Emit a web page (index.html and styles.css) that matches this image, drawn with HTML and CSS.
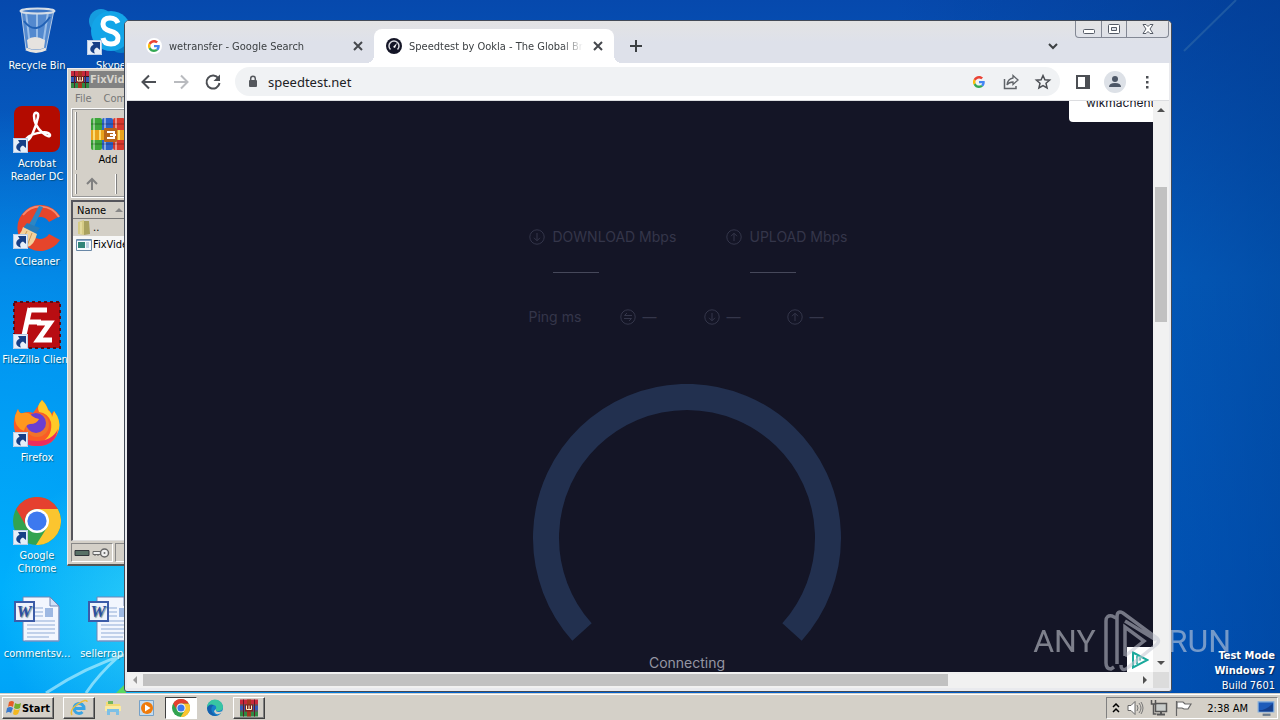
FILE: index.html
```html
<!DOCTYPE html>
<html lang="en">
<head>
<meta charset="utf-8">
<title>Desktop</title>
<link rel="stylesheet" href="styles.css">
</head>
<body>
<svg class="defs" aria-hidden="true">
  <symbol id="shortcut" viewBox="0 0 15 15">
    <path d="M0 0h15v15H0z" fill="#e6eef8"/><path d="M.5.5h14v14H.5z" fill="none" stroke="#b9cce6"/>
    <path d="M5 2h8v8l-3-2.500C7 8.500 6.500 11 8 13.500 2.500 12.500 1.500 7.500 6.500 4.800z" fill="#173f86"/>
  </symbol>
  <symbol id="chrome" viewBox="0 0 48 48">
    <circle cx="24" cy="24" r="24" fill="#32a350"/>
    <path d="M24 12h20.800A24 24 0 0 1 23 48l11.400-18z" fill="#fbc52f"/>
    <path d="M3.200 12A24 24 0 0 1 44.800 12H24a12 12 0 0 0-10.400 18z" fill="#e5402f"/>
    <circle cx="24" cy="24" r="12" fill="#fff"/><circle cx="24" cy="24" r="9.600" fill="#3d79ef"/>
  </symbol>
  <symbol id="rar" viewBox="0 0 34 34">
    <rect y="1" width="11" height="32" rx="2" fill="#3da53a"/><rect x="11" y="1" width="11" height="32" rx="2" fill="#2c62c8"/><rect x="22" y="1" width="12" height="32" rx="2" fill="#d8392d"/>
    <path d="M3 1v32M14 1v32M25 1v32" stroke="#fff" stroke-opacity=".45" stroke-width="2"/>
    <path d="M0 7h34M0 27h34" stroke="#000" stroke-opacity=".15" stroke-width="2"/>
    <path d="M0 13h34v10H0z" fill="#e9a21c"/><path d="M3 13v10M9 13v10M28 13v10" stroke="#fbdc75" stroke-width="2"/>
    <rect x="13" y="11" width="13" height="14" rx="1" fill="#b5651a"/><path d="M16 15h7v6h-7M19 18h6" fill="none" stroke="#fff" stroke-width="2"/>
  </symbol>
  <symbol id="rar-small" viewBox="0 0 18 17">
    <path d="M0 0h18v5H0z" fill="#c8283c"/><path d="M0 6h18v5H0z" fill="#3558b4"/><path d="M0 12h18v5H0z" fill="#2f8a43"/>
    <path d="M0 5.500h18M0 11.500h18" stroke="#241a28"/><path d="M3.500 0v17M14.500 0v17" stroke="#631827"/>
    <path d="M7 0h4v17H7z" fill="#a5381f"/><path d="M5 5h8v7H5z" fill="#7b251f"/><path d="M6.500 6v4h5V6M9 6v4" fill="none" stroke="#fff2cb"/>
  </symbol>
  <symbol id="google" viewBox="0 0 48 48">
    <path fill="#EA4335" d="M24 9.500c3.540 0 6.710 1.220 9.210 3.600l6.850-6.850C35.900 2.380 30.470 0 24 0 14.620 0 6.510 5.380 2.560 13.220l7.980 6.190C12.430 13.720 17.740 9.500 24 9.500z"/>
    <path fill="#4285F4" d="M46.980 24.550c0-1.570-.15-3.090-.38-4.550H24v9.020h12.940c-.58 2.960-2.260 5.480-4.780 7.180l7.730 6c4.510-4.180 7.090-10.360 7.090-17.650z"/>
    <path fill="#FBBC05" d="M10.530 28.590a14.500 14.500 0 0 1 0-9.180l-7.980-6.190a24 24 0 0 0 0 21.560z"/>
    <path fill="#34A853" d="M24 48c6.480 0 11.930-2.130 15.890-5.810l-7.730-6C30.010 37.640 27.240 38.490 24 38.490c-6.260 0-11.570-4.220-13.470-9.910l-7.980 6.190C6.510 42.620 14.620 48 24 48z"/>
  </symbol>
  <symbol id="word" viewBox="0 0 48 48">
    <path d="M10 2h27l9 9v35H10z" fill="#f2f6fe" stroke="#6f86b6"/><path d="M37 2v9h9z" fill="#cfe0f7" stroke="#6f86b6"/>
    <path d="M12 46h34V12" fill="none" stroke="#8098c8"/>
    <path d="M22 13h8M22 17h8M22 21h8M14 26h28M14 30h28M14 34h28M14 38h28M14 42h22" stroke="#8fabd6"/>
    <path d="M32 13h8v9h-8z" fill="#9db8e2"/>
    <rect x="2" y="7" width="19" height="19" fill="#eef3fd" stroke="#3c5ca8" stroke-width="2"/>
    <text x="11" y="22" text-anchor="middle" font-family="Liberation Serif, serif" font-weight="bold" font-style="italic" font-size="17" fill="#2b4fa2">W</text>
  </symbol>
  <symbol id="down" viewBox="0 0 16 16"><circle cx="8" cy="8" r="7.200"/><path d="M8 4v7.500M5 8.800l3 3 3-3"/></symbol>
  <symbol id="up" viewBox="0 0 16 16"><circle cx="8" cy="8" r="7.200"/><path d="M8 12V4.500M5 7.200l3-3 3 3"/></symbol>
  <symbol id="ping" viewBox="0 0 16 16"><circle cx="8" cy="8" r="7.200"/><path d="M12 6.500H4.500l2.500-2.500M4 9.500h7.500L9 12"/></symbol>
  <symbol id="close" viewBox="0 0 16 16"><path d="M4 4l8 8M12 4l-8 8" fill="none" stroke="#45484d" stroke-width="2"/></symbol>
</svg>

<main class="desktop">
  <svg class="streaks" viewBox="0 0 130 130" aria-hidden="true">
    <path d="M46 130Q85 104 130 90M86 130Q98 112 118 94" fill="none" stroke="#c9f6ff" stroke-opacity=".6" stroke-width="3"/>
    <path d="M116 130l10-10v10z" fill="#58d860"/>
  </svg>
  <svg class="glow" viewBox="0 0 108 80" aria-hidden="true"><path d="M12 51L64 0" stroke="#2f69a8" stroke-opacity=".6" stroke-width="2"/></svg>

  <ul class="icons">
    <li class="icon"><svg viewBox="0 0 48 48"><path d="M8 3l5 39q10 5 20 0l8-39z" fill="#7eaade" fill-opacity=".65" stroke="#b6cae4"/><path d="M13 5l4 34M24 6v34M35 5l-5 33" stroke="#c8e0f8" stroke-opacity=".6" stroke-width="2"/><path d="M14 33q7-6 18 0l-1 8q-8 3-16 0z" fill="#e6e3df"/><path d="M11 14q12 16 26-4" fill="none" stroke="#2161b5" stroke-width="2"/><path d="M13 42q10 5 20 0" fill="none" stroke="#e9e5df" stroke-width="3"/><ellipse cx="24.500" cy="4" rx="17" ry="2.500" fill="#3d76c5" stroke="#d5dde6" stroke-width="2"/></svg><span>Recycle Bin</span></li>
    <li class="icon"><svg viewBox="0 0 48 48"><rect x="1" y="1" width="46" height="46" rx="8" fill="#b30b00"/><path d="M12 36c2-7 23-12 25-6 1 5-16-5-16-19 0-5 5-4 4 1-2 10-8 26-13 24" fill="none" stroke="#fff" stroke-width="2.500"/><use href="#shortcut" y="33" width="15" height="15"/></svg><span>Acrobat<br>Reader DC</span></li>
    <li class="icon"><svg viewBox="0 0 48 48"><path d="M47 13A23 23 0 1 0 47 37l-11-6a11 11 0 1 1 0-12z" fill="#e5452b"/><path d="M46 14A22 22 0 0 0 10 12" fill="none" stroke="#f6896b" stroke-width="2"/><path d="M30 4L21 24l-5-2L26 3z" fill="#2c86c4"/><path d="M14 20l13 5-4 5-13-5z" fill="#277cb9"/><path d="M10 24l14 7q-3 12-10 13L1 35q7-3 9-11z" fill="#f2d19b"/><path d="M14 28l-6 12M19 30l-5 13" stroke="#c99755"/><use href="#shortcut" y="31" width="15" height="15"/></svg><span>CCleaner</span></li>
    <li class="icon"><svg viewBox="0 0 48 48"><path d="M1 1h46v46H1z" fill="#b80d12"/><path d="M1 1h46v46H1z" fill="none" stroke="#590c16" stroke-width="2" stroke-dasharray="3 3"/><path d="M17 9h17M13 21h15M17 7L10 39M24 22h13L25 39h14" fill="none" stroke="#fff" stroke-width="5"/><use href="#shortcut" y="33" width="15" height="15"/></svg><span>FileZilla Client</span></li>
    <li class="icon"><svg viewBox="0 0 48 48"><path d="M5 10q1 5 5 4 6-2 10 0l5-7 4-6q4 4 6 9 3 2 3 5l3-3q6 9 5 17-3 18-22 18T1 29Q0 18 5 10z" fill="#fa5b25"/><path d="M29 1q5 5 6 10 4 3 4 7l2-6q7 9 5 18-4 13-17 13 11-7 9-20-3-9-12-10-3-6 3-12z" fill="#ffca28"/><circle cx="24" cy="26" r="12" fill="#f1732a"/><circle cx="23" cy="24" r="10" fill="#6b3ed0"/><path d="M5 10q1 5 5 4 6-1 9 3 4 3 7 3-2 5-9 5-5 1-6 7Q1 28 2 17z" fill="#ff981f"/><path d="M3 32q6 10 21 10 15 0 21-12-3 17-21 17Q7 47 3 32z" fill="#ed2c5d"/><use href="#shortcut" y="33" width="15" height="15"/></svg><span>Firefox</span></li>
    <li class="icon"><svg viewBox="0 0 48 48"><use href="#chrome" width="48" height="48"/><use href="#shortcut" y="33" width="15" height="15"/></svg><span>Google<br>Chrome</span></li>
    <li class="icon"><svg viewBox="0 0 48 48"><use href="#word" width="48" height="48"/></svg><span>commentsv...</span></li>
    <li class="icon"><svg viewBox="0 0 48 48"><circle cx="14" cy="14" r="12" fill="#159cdf"/><circle cx="34" cy="34" r="12" fill="#087ec4"/><circle cx="24" cy="24" r="20" fill="#13a5e8"/><path d="M31 16q-2-5-8-5-7 0-7 6 0 5 7 7 8 2 8 7 0 6-7 6-7 0-8-6" fill="none" stroke="#fff" stroke-width="5"/><use href="#shortcut" y="33" width="15" height="15"/></svg><span>Skype</span></li>
    <li class="icon last-row"><svg viewBox="0 0 48 48"><use href="#word" width="48" height="48"/></svg><span>sellerrappi...</span></li>
  </ul>

  <section class="rar-window">
    <header class="rar-title"><svg><use href="#rar-small"/></svg><span>FixVideo</span></header>
    <nav class="rar-menu"><span>File</span><span>Commands</span></nav>
    <div class="rar-bars">
      <div class="rar-tools"><i class="grip"></i><button class="rar-add"><svg><use href="#rar"/></svg>Add</button></div>
      <div class="rar-nav"><i class="grip"></i><svg viewBox="0 0 14 14"><path d="M7 13V2M2 7l5-5 5 5" fill="none" stroke="#808080" stroke-width="2"/></svg><i class="grip"></i></div>
    </div>
    <div class="rar-list">
      <div class="rar-head">Name <svg viewBox="0 0 8 4"><path d="M0 4l4-4 4 4z" fill="#888"/></svg></div>
      <div class="rar-row selected"><svg viewBox="0 0 16 16"><path d="M2 2l6-2v15l-6-1z" fill="#d6cb85"/><path d="M8 1h5l1 13-6 1z" fill="#a9a15f"/><path d="M5 2v12" stroke="#f0e8b4"/></svg>..</div>
      <div class="rar-row"><svg viewBox="0 0 16 16"><path d="M.5 2.500h15v11H.5z" fill="#f6fafd" stroke="#6887a6"/><path d="M2 5h7v6H2z" fill="#318579"/><path d="M10 6h3M10 8h3M10 10h3M1 3.500h14" stroke="#88a7c9"/></svg>FixVideo</div>
    </div>
    <footer class="rar-status"><div><svg viewBox="0 0 36 14"><path d="M1 4.500h14v5H1z" fill="#587066" stroke="#30343a"/><path d="M19 5.500h10v3H19z" fill="#eee" stroke="#666"/><path d="M21 10v-2M24 10v-2" stroke="#666"/><circle cx="30.500" cy="7" r="4" fill="#eee" stroke="#666" stroke-width="1.500"/><circle cx="30.500" cy="7" r="1" fill="#666"/></svg></div><div></div></footer>
  </section>

  <section class="browser">
    <header class="tabstrip">
      <div class="tab"><svg class="favicon" viewBox="0 0 16 16"><circle cx="8" cy="8" r="8" fill="#fff"/><use href="#google" x="2" y="2" width="12" height="12"/></svg><span>wetransfer - Google Search</span><button aria-label="Close tab"><svg><use href="#close"/></svg></button></div>
      <div class="tab active"><svg class="favicon" viewBox="0 0 16 16"><circle cx="8" cy="8" r="8" fill="#141526"/><path d="M4.500 11.500a5 5 0 1 1 7 0" fill="none" stroke="#d8d8de" stroke-width="1.500"/><path d="M7 9l4-4-2 5z" fill="#fff"/></svg><span>Speedtest by Ookla - The Global Broadband</span><button aria-label="Close tab"><svg><use href="#close"/></svg></button></div>
      <button class="new-tab" aria-label="New tab"><svg viewBox="0 0 16 16"><path d="M8 2v12M2 8h12" stroke="#3c4043" stroke-width="2"/></svg></button>
      <button class="tab-search" aria-label="Search tabs"><svg viewBox="0 0 16 16"><path d="M4 6l4 4 4-4" fill="none" stroke="#3c4043" stroke-width="2"/></svg></button>
      <div class="controls">
        <button aria-label="Minimize"><svg viewBox="0 0 14 12"><rect x="1.500" y="6.500" width="11" height="4" rx="1" fill="#fff" stroke="#555b66"/></svg></button>
        <button aria-label="Restore"><svg viewBox="0 0 14 12"><rect x="1.500" y="1.500" width="11" height="9" rx="1" fill="#fff" stroke="#555b66"/><path d="M4.500 4.500h5v3h-5z" fill="#dee1e9" stroke="#555b66"/></svg></button>
        <button class="wide" aria-label="Close"><svg viewBox="0 0 14 12"><path d="M2 1.500h3l2 2 2-2h3L9 6l3 4.500H9l-2-2-2 2H2L5 6z" fill="#fff" stroke="#555b66"/></svg></button>
      </div>
    </header>
    <div class="toolbar">
      <button aria-label="Back"><svg viewBox="0 0 18 18"><path d="M16 9H3M9 2.500L2.500 9 9 15.500" fill="none" stroke="#4c4f54" stroke-width="2"/></svg></button>
      <button aria-label="Forward"><svg viewBox="0 0 18 18"><path d="M2 9h13M9 2.500L15.500 9 9 15.500" fill="none" stroke="#b9bbbf" stroke-width="2"/></svg></button>
      <button aria-label="Reload"><svg viewBox="0 0 18 18"><path d="M14.500 5.500A6.500 6.500 0 1 0 15.500 10" fill="none" stroke="#4c4f54" stroke-width="2"/><path d="M16 1.500V8H9.500z" fill="#4c4f54"/></svg></button>
      <div class="omnibox">
        <svg class="lock" viewBox="0 0 12 14"><path d="M3 5h6q1 0 1 1v5q0 1-1 1H3q-1 0-1-1V6q0-1 1-1z" fill="#55585d"/><path d="M3.700 5.500V3.500a2.300 2.300 0 0 1 4.600 0v2" fill="none" stroke="#55585d" stroke-width="1.500"/></svg>
        <input type="text" value="speedtest.net" aria-label="Address">
        <button aria-label="Google"><svg class="g" viewBox="0 0 48 48"><use href="#google" width="48" height="48"/></svg></button>
        <button aria-label="Share"><svg viewBox="0 0 18 18"><path d="M2.500 6v9.500H14V13" fill="none" stroke="#5f6368" stroke-width="1.500"/><path d="M11 2.500l5 4.500-5 4.500V9Q7 9 5 12q.5-6 6-7z" fill="none" stroke="#5f6368" stroke-width="1.300"/></svg></button>
        <button aria-label="Bookmark"><svg viewBox="0 0 18 18"><path d="M9 2.500l1.900 4.300 4.700.4-3.600 3.100 1.100 4.600L9 12.500l-4.100 2.400L6 10.300 2.400 7.200l4.700-.4z" fill="none" stroke="#4c4f54" stroke-width="1.500"/></svg></button>
      </div>
      <button aria-label="Side panel"><svg viewBox="0 0 18 18"><path d="M3 3h12v12H3z" fill="none" stroke="#4c4f54" stroke-width="2"/><path d="M11 3h5v12h-5z" fill="#4c4f54"/></svg></button>
      <button aria-label="Profile"><svg class="avatar" viewBox="0 0 22 22"><circle cx="11" cy="11" r="11" fill="#dde1e7"/><circle cx="11" cy="8" r="3" fill="#4d5766"/><path d="M5 16q0-4 6-4t6 4z" fill="#4d5766"/></svg></button>
      <button aria-label="Menu"><svg viewBox="0 0 18 18"><path d="M8 3h2.500v2.500H8zM8 8h2.500v2.500H8zM8 13h2.500v2.500H8z" fill="#4c4f54"/></svg></button>
    </div>
    <div class="view">
      <article class="page">
        <div class="server">wikmachent</div>
        <div class="results">
          <div class="result"><svg><use href="#down"/></svg><h2>DOWNLOAD Mbps</h2><hr></div>
          <div class="result"><svg><use href="#up"/></svg><h2>UPLOAD Mbps</h2><hr></div>
        </div>
        <div class="pings"><span>Ping ms</span><span><svg><use href="#ping"/></svg>—</span><span><svg><use href="#down"/></svg>—</span><span><svg><use href="#up"/></svg>—</span></div>
        <svg class="gauge" viewBox="0 0 308 258"><path d="M49 248A141 141 0 1 1 259 248" fill="none" stroke="#22304f" stroke-width="26"/></svg>
        <p class="status">Connecting</p>
        <div class="ad"><svg viewBox="0 0 18 18"><path d="M2 1.500L16.500 9 2 16.500z" fill="none" stroke="#1aa99c" stroke-width="2"/><path d="M6 5v8M9 6.500v3" stroke="#1aa99c" stroke-width="1.500"/></svg></div>
      </article>
      <div class="vscroll"><svg viewBox="0 0 8 5"><path d="M0 5l4-4 4 4z"/></svg><div class="track"><i></i></div><svg viewBox="0 0 8 5"><path d="M0 0l4 4 4-4z"/></svg></div>
      <div class="hscroll"><svg viewBox="0 0 5 8"><path d="M5 0L1 4l4 4z" fill="#999"/></svg><div class="track"><i></i></div><svg viewBox="0 0 5 8"><path d="M0 0l4 4-4 4z"/></svg></div>
      <div class="corner"></div>
    </div>
  </section>

  <div class="watermark"><span>ANY</span><svg viewBox="0 0 60 64"><path d="M14 9l-4-2q-6-1-6 5v42q0 6 5 6l3-2M15 55V8q0-7 6-4l34 25q3 3 0 6L24 60q-5 2-5-4M23 47V18l19 14-19 15M23 12l31 19" fill="none" stroke="#c5c8d3" stroke-width="3.500"/></svg><span>RUN</span></div>
  <div class="build"><b>Test Mode</b><b>Windows 7</b><span>Build 7601</span></div>
</main>

<footer class="taskbar">
  <button class="start"><svg viewBox="0 0 16 16"><path d="M3 2q3-2 5 0L7 7Q4 5 2 7z" fill="#e65d27"/><path d="M9 3q3 2 6 0l-1 5q-3 2-6 0z" fill="#76ae2c"/><path d="M1 8q3-2 6 0l-2 5q-2-2-5 0z" fill="#3979cb"/><path d="M8 9q3 2 6 0l-2 5q-3 2-5 0z" fill="#f3b820"/></svg>Start</button>
  <button class="task raised" aria-label="Internet Explorer"><svg viewBox="0 0 18 18"><path d="M5 9.500h9A5 5 0 1 0 12.500 13" fill="none" stroke="#39a4e4" stroke-width="3"/><path d="M2 16Q-1 11 8 5t9-2" fill="none" stroke="#efbd34" stroke-width="1.500"/></svg></button>
  <button class="task" aria-label="Explorer"><svg viewBox="0 0 18 18"><path d="M2 3h6l1 2h7v5H2z" fill="#f4db75"/><path d="M4 2h5v3H4z" fill="#75b75a"/><path d="M1 7h16v5H1z" fill="#faeaa2"/><path d="M3 10h12v6h-3v-3H6v3H3z" fill="#7dc0e6"/></svg></button>
  <button class="task" aria-label="Media Player"><svg viewBox="0 0 18 18"><path d="M1.500 1.500h14v15h-14z" fill="#c5dcef" stroke="#75a1c7"/><circle cx="9" cy="9" r="6" fill="#ef7b0b"/><path d="M7 5.500v7L12.500 9z" fill="#fff"/></svg></button>
  <button class="task pressed" aria-label="Chrome"><svg><use href="#chrome"/></svg></button>
  <button class="task" aria-label="Edge"><svg viewBox="0 0 18 18"><circle cx="9" cy="9" r="8" fill="#1680ca"/><path d="M1 9a8 8 0 0 1 16-1q0 4-5 4-3 0-2-2 1-4-3-4-4 0-6 3z" fill="#38c5a2"/><path d="M1 9q2-5 7-3-4 2-2 7 2 3 6 4Q2 18 1 9z" fill="#1660ac"/><path d="M10 10q-1 3 3 3 3 0 4-2l-1 3q-7 3-8-2z" fill="#d4d0c8"/></svg></button>
  <button class="task raised" aria-label="WinRAR"><svg><use href="#rar-small"/></svg></button>
  <div class="tray">
    <svg class="more" viewBox="0 0 8 10"><path d="M1 4l3-3 3 3M1 9l3-3 3 3" fill="none" stroke="#000" stroke-width="1.500"/></svg>
    <svg viewBox="0 0 18 18"><path d="M2 6.500h3L9 2.500v13l-4-4H2z" fill="#fff" stroke="#666"/><path d="M11 6q2 3 0 6M13 4q4 5 0 10M15 3q4 6 0 12" fill="none" stroke="#777"/></svg>
    <svg viewBox="0 0 18 18"><path d="M5.500 4.500h11v8h-11z" fill="#c8ccca" stroke="#555" stroke-width="1.500"/><path d="M7 15.500h8M11 13v3" stroke="#555" stroke-width="2"/><path d="M1.500 1v4h4V1M3.500 5v10h3" fill="none" stroke="#555" stroke-width="1.500"/></svg>
    <svg viewBox="0 0 18 18"><path d="M2.500 2v15M3 3h6l2 2h6l-3 5h-4L8 9H3z" fill="#fff" stroke="#666" stroke-width="1.200"/></svg>
    <time>2:38 AM</time>
    <svg viewBox="0 0 16 16"><path d="M1 2.500h14v9H1z" fill="#1e5bb9" stroke="#86b0dc"/><path d="M2 10q6 0 12-6v7H2z" fill="#153f8c"/><path d="M5 14h7" stroke="#69798b" stroke-width="2"/></svg>
  </div>
</footer>
</body>
</html>
```

FILE: styles.css
```css
* { box-sizing: border-box; }
body {
  margin: 0;
  height: 100vh;
  display: flex;
  flex-direction: column;
  overflow: hidden;
  font: 11px/13px "DejaVu Sans Condensed", "DejaVu Sans", sans-serif;
  font-stretch: condensed;
  color: #000;
}
button { border: 0; padding: 0; background: none; font: inherit; color: inherit; display: flex; align-items: center; justify-content: center; }
svg { display: block; flex: none; }
.defs { position: absolute; width: 0; height: 0; }

.desktop {
  flex: 1;
  position: relative;
  overflow: hidden;
  background:
    radial-gradient(circle at 150px 88%, rgba(60, 225, 250, .7), transparent 150px),
    radial-gradient(circle at 0 85%, rgba(0, 180, 255, .95), rgba(0, 170, 255, .7) 240px, transparent 480px),
    linear-gradient(90deg, transparent 70%, rgba(0, 55, 135, .55)),
    linear-gradient(#0649ad, #056bd2 40%, #0060ce);
}
.streaks { position: absolute; left: 0; bottom: 0; width: 130px; }
.glow { position: absolute; right: 0; top: 0; width: 108px; }

.icons {
  list-style: none;
  margin: 0;
  padding: 7px 0 0;
  display: grid;
  grid-template-columns: 74px 74px;
  grid-template-rows: repeat(7, 98px);
  grid-auto-flow: column;
}
.icon { display: flex; flex-direction: column; align-items: center; gap: 4px; color: #fff; text-align: center; text-shadow: 1px 1px 1px #0338; white-space: nowrap; }
.icon svg { width: 48px; height: 48px; }
.last-row { grid-area: 7 / 2; }

.rar-window {
  position: absolute;
  left: 67px;
  top: 68px;
  width: 480px;
  height: 498px;
  padding: 2px 3px;
  display: flex;
  flex-direction: column;
  background: #d4d0c8;
  border: 1px solid #eee;
  border-bottom: 2px solid #555;
}
.rar-title { height: 17px; display: flex; align-items: center; gap: 1px; background: #828282; color: #d8d5ce; font-weight: bold; }
.rar-title svg { width: 18px; height: 17px; }
.rar-menu { height: 20px; display: flex; align-items: center; gap: 12px; padding-left: 4px; color: #777; }
.rar-bars { height: 90px; padding: 3px; border: 1px solid #fff; outline: 1px solid #999; outline-offset: -2px; display: flex; flex-direction: column; gap: 4px; }
.rar-tools { height: 58px; display: flex; gap: 14px; }
.rar-nav { height: 20px; display: flex; gap: 8px; align-items: center; }
.rar-nav svg { width: 14px; height: 14px; }
.rar-nav .grip:last-child { margin-left: 8px; }
.grip { height: 100%; width: 2px; border-left: 1px solid #fff; border-right: 1px solid #808080; }
.rar-add { flex-direction: column; gap: 2px; }
.rar-add svg { width: 34px; height: 34px; }
.rar-list { flex: 1; margin-top: 2px; border: 2px solid #55555c; border-right: 0; border-bottom: 1px solid #ddd; background: #f7f7f7; }
.rar-head { height: 17px; display: flex; align-items: center; gap: 9px; padding-left: 4px; background: #d4d0c8; border-bottom: 1px solid #777; }
.rar-head svg { width: 8px; height: 4px; }
.rar-row { height: 17px; display: flex; align-items: center; gap: 1px; padding-left: 3px; }
.rar-row svg { width: 16px; height: 16px; }
.selected { background: #d4d0c8; }
.rar-status { height: 21px; display: flex; gap: 2px; padding-top: 2px; }
.rar-status div { border: 1px solid #888; border-right-color: #fff; border-bottom-color: #fff; width: 42px; display: flex; align-items: center; justify-content: center; }
.rar-status div:last-child { flex: 1; }
.rar-status svg { width: 36px; height: 14px; }

.browser {
  position: absolute;
  inset: 20px 108px 1px 124px;
  padding: 0 2px 3px;
  display: flex;
  flex-direction: column;
  background: #e9eaee;
  border: 1px solid #434a57;
  border-radius: 5px 5px 3px 3px;
  overflow: hidden;
}
.tabstrip { height: 42px; display: flex; align-items: flex-end; padding-left: 9px; background: linear-gradient(#e3e3e4, #dee1ea 50%); color: #3c4043; margin: 0 -2px; }
.tab { position: relative; flex: 0 1 240px; min-width: 0; height: 34px; display: flex; align-items: center; gap: 7px; padding: 0 8px 0 12px; }
.tab span { flex: 1; min-width: 0; overflow: hidden; white-space: nowrap; mask-image: linear-gradient(90deg, #000 88%, transparent); }
.tab svg { width: 16px; height: 16px; }
.active { background: #fff; border-radius: 8px 8px 0 0; }
.active::before, .active::after { content: ""; position: absolute; bottom: 0; width: 8px; height: 8px; }
.active::before { right: 100%; background: radial-gradient(circle at 0 0, transparent 8px, #fff 8px); }
.active::after { left: 100%; background: radial-gradient(circle at 100% 0, transparent 8px, #fff 8px); }
.new-tab, .tab-search { width: 28px; height: 34px; margin-left: 8px; }
.new-tab svg, .tab-search svg { width: 16px; height: 16px; }
.tab-search { margin: 0 8px 0 auto; }
.controls { align-self: flex-start; display: flex; height: 17px; margin-right: 2px; border: 1px solid #838894; border-top: 0; border-radius: 0 0 4px 4px; }
.controls button { width: 25px; }
.controls button + button { border-left: 1px solid #838894; }
.controls .wide { width: 42px; }
.controls svg { width: 14px; height: 12px; }

.toolbar { height: 38px; display: flex; align-items: center; padding: 0 6px; background: #fff; border-bottom: 1px solid #dcdde0; }
.toolbar button { width: 32px; height: 28px; }
.toolbar svg { width: 18px; height: 18px; }
.toolbar .avatar { width: 22px; height: 22px; }
.omnibox { flex: 1; height: 29px; display: flex; align-items: center; margin: 0 7px 0 6px; padding: 0 1px 0 12px; border-radius: 15px; background: #f0f2f4; }
.toolbar .lock { width: 12px; height: 14px; }
.toolbar .g { width: 12px; height: 12px; }
.omnibox input { flex: 1; min-width: 0; border: 0; padding: 0 0 0 9px; background: none; font: 13px "Noto Sans", sans-serif; color: #202124; outline: 0; }

.view { flex: 1; min-height: 0; display: grid; grid-template: minmax(0, 1fr) 16px / minmax(0, 1fr) 16px; }
.page { position: relative; overflow: hidden; padding: 128px 0 0 94px; display: flex; flex-direction: column; align-items: center; background: #141526; color: #34364a; font: 14px/16px Inter, sans-serif; }
.page svg { fill: none; stroke: #34364a; width: 16px; height: 16px; }
.server { position: absolute; right: 0; top: 0; width: 84px; height: 21px; padding: 0 0 0 17px; line-height: 4px; background: #fff; border-radius: 0 0 0 4px; color: #141526; font-size: 12px; overflow: hidden; }
.results { display: grid; grid-template-columns: 197px 120px; }
.result { display: grid; grid-template-columns: 16px auto; justify-content: start; column-gap: 8px; row-gap: 27px; }
.result h2 { margin: 0; font: 14px/16px Inter, sans-serif; white-space: nowrap; }
.result hr { grid-column: 2; width: 46px; margin: 0; border: 0; border-top: 1px solid #46485a; }
.pings { width: 317px; display: grid; grid-template-columns: 91px 84px 83px auto; margin-top: 36px; }
.pings span { display: flex; gap: 7px; }
.page .gauge { width: 308px; height: 258px; margin-top: 59px; }
.status { margin: 13px 0 0; color: #9495a3; }
.ad { position: absolute; right: 0; bottom: 0; width: 26px; height: 25px; display: grid; place-items: center; background: #fff; }
.page .ad svg { width: 18px; height: 18px; }
.vscroll, .hscroll { display: flex; align-items: center; justify-content: space-between; background: #f1f1f1; }
.vscroll { flex-direction: column; padding: 6px 0; }
.vscroll svg { width: 8px; height: 5px; fill: #505050; }
.hscroll { padding: 0 5px; }
.hscroll svg { width: 5px; height: 8px; fill: #505050; }
.track { flex: 1; display: flex; }
.vscroll .track { width: 12px; margin: 5px 0; flex-direction: column; }
.vscroll i { height: 25%; margin-top: 70px; background: #c1c1c1; }
.hscroll .track { height: 12px; margin: 0 6px; }
.hscroll i { width: 81%; background: #c1c1c1; }
.corner { background: #dcdcdc; }

.watermark { position: absolute; right: 49px; bottom: 20px; display: flex; align-items: center; gap: 6px; opacity: .55; color: #d5d8e0; font: 32px/40px "Liberation Sans Narrow", Roboto, sans-serif; }
.watermark svg { width: 60px; height: 64px; }
.build { position: absolute; right: 5px; bottom: 0; display: flex; flex-direction: column; align-items: flex-end; gap: 1px; line-height: 14px; color: #fff; text-shadow: 1px 1px 1px #013a; }

.taskbar { height: 27px; display: flex; align-items: center; padding: 3px 2px 1px; background: #d4d0c8; border-top: 1px solid #d4d0c8; box-shadow: inset 0 1px #fff; }
.start, .raised { border: 1px solid; border-color: #fff #404040 #404040 #fff; box-shadow: inset -1px -1px #808080; }
.start { height: 22px; width: 52px; margin-right: 9px; font-weight: bold; }
.start svg { width: 16px; height: 16px; }
.task { width: 32px; height: 22px; margin-right: 2px; }
.task svg { width: 18px; height: 18px; }
.pressed { border: 1px solid; border-color: #404040 #fff #fff #404040; background: #fff; }
.tray { margin-left: auto; height: 22px; display: flex; align-items: center; gap: 6px; padding: 0 2px 0 5px; border: 1px solid; border-color: #808080 #fff #fff #808080; }
.tray svg { width: 18px; height: 18px; }
.tray .more { width: 8px; height: 10px; }
.tray time { margin: 0 3px 0 9px; }
```
